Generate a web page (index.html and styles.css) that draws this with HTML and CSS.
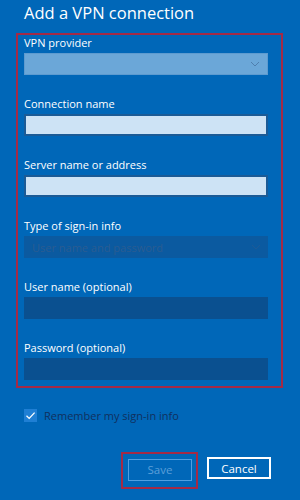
FILE: index.html
```html
<!DOCTYPE html>
<html>
<head>
    <title>Add a VPN connection</title>
    <link rel="stylesheet" href="styles.css">
</head>
<body>
    <h1 class="title">Add a VPN connection</h1>
    <form class="vpn-form" id="vpnForm">
        <div class="fields">
            <div class="field">
                <label for="provider">VPN provider</label>
                <div class="select select-light" id="provider">
                    <span class="select-text"></span>
                    <svg class="chevron" width="10" height="6" viewBox="0 0 10 6"><path d="M1 1 L5 5 L9 1" fill="none" stroke="#4f7fae" stroke-width="1"/></svg>
                </div>
            </div>
            <div class="field">
                <label for="connname">Connection name</label>
                <input type="text" id="connname" class="text-input">
            </div>
            <div class="field">
                <label for="server">Server name or address</label>
                <input type="text" id="server" class="text-input">
            </div>
            <div class="field">
                <label for="signin">Type of sign-in info</label>
                <div class="select select-dark" id="signin">
                    <span class="select-text">User name and password</span>
                    <svg class="chevron" width="10" height="6" viewBox="0 0 10 6"><path d="M1 1 L5 5 L9 1" fill="none" stroke="#1d5a96" stroke-width="1"/></svg>
                </div>
            </div>
            <div class="field">
                <label for="username">User name (optional)</label>
                <input type="text" id="username" class="text-input dark-input" disabled>
            </div>
            <div class="field">
                <label for="password">Password (optional)</label>
                <input type="password" id="password" class="text-input dark-input" disabled>
            </div>
        </div>

        <div class="remember">
            <span class="checkbox">
                <svg width="13" height="13" viewBox="0 0 13 13"><path d="M2.5 6.8 L5.2 9.4 L10.6 3.6" fill="none" stroke="#ffffff" stroke-width="1.3"/></svg>
            </span>
            <span class="remember-text">Remember my sign-in info</span>
        </div>

        <div class="buttons">
            <div class="save-wrap">
                <button type="button" class="btn btn-save" disabled>Save</button>
            </div>
            <button type="button" class="btn btn-cancel">Cancel</button>
        </div>
    </form>
</body>
</html>
```

FILE: styles.css
```css
body {
    font-family: "Open Sans", "Noto Sans", Arial, sans-serif;
    margin: 0;
    background-color: #0067b8;
    color: #ffffff;
    width: 300px;
    height: 500px;
    overflow: hidden;
}
.title {
    font-size: 16.5px;
    font-weight: 400;
    margin: 0;
    padding: 0 0 0 24px;
    line-height: 26px;
    height: 33px;
}
.vpn-form {
    margin: 0;
}
.fields {
    margin-left: 16px;
    width: 257px;
    border: 2px solid #a42a46;
    padding: 1px 0 6px 6px;
}
.field {
    margin-bottom: 22px;
}
.field:last-child {
    margin-bottom: 0;
}
label {
    display: block;
    font-size: 11px;
    line-height: 14px;
    margin-bottom: 3px;
}
.select,
.text-input {
    display: block;
    width: 244px;
    height: 22px;
    box-sizing: border-box;
    margin: 0;
}
.select {
    display: flex;
    align-items: center;
    justify-content: space-between;
    padding: 0 7px 0 8px;
}
.select-light {
    background-color: #6ba7d8;
    border: 1px solid #5d9bd0;
}
.select-dark {
    background-color: #0b5aa0;
}
.select-text {
    font-size: 11px;
    color: #2a5c92;
}
.text-input {
    background-color: #cde3f5;
    border: 2px solid #1b5b96;
    padding: 0 6px;
}
.dark-input {
    background-color: #0a5090;
    border: none;
}
.remember {
    display: flex;
    align-items: center;
    margin: 20px 0 0 24px;
}
.checkbox {
    width: 13px;
    height: 13px;
    background-color: #1f7fd4;
    display: inline-block;
    margin-right: 7px;
}
.checkbox svg {
    display: block;
}
.remember-text {
    font-size: 11px;
    color: #10305e;
}
.buttons {
    display: flex;
    justify-content: flex-end;
    align-items: flex-start;
    margin: 29px 29px 0 0;
}
.save-wrap {
    border: 2px solid #a42a46;
    padding: 3px 4px 6px 5px;
    margin-right: 9px;
}
.btn {
    width: 64px;
    height: 22px;
    font-family: "Open Sans", "Noto Sans", Arial, sans-serif;
    font-size: 11.5px;
    background-color: transparent;
    box-sizing: border-box;
    padding: 0;
}
.btn-save {
    border: 1px solid #4f9fe0;
    color: #5b9fd8;
}
.btn-cancel {
    border: 2px solid #ffffff;
    color: #ffffff;
    margin-top: 5px;
}
```
